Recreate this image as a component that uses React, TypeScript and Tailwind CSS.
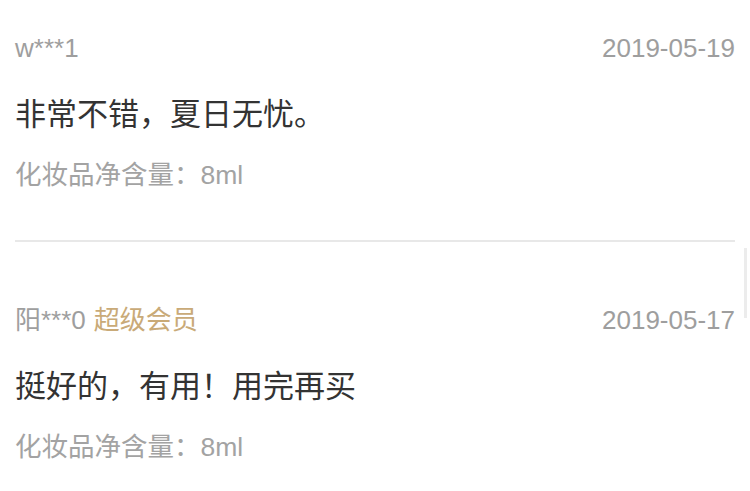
const reviews = [
  { user: "w***1", vip: false, date: "2019-05-19", text: "非常不错，夏日无忧。", spec: "化妆品净含量：8ml" },
  { user: "阳***0", vip: true, date: "2019-05-17", text: "挺好的，有用！用完再买", spec: "化妆品净含量：8ml" },
];

export default function App() {
  return (
    <div
      className="relative h-[491px] w-[750px] overflow-hidden bg-white"
      style={{ fontFamily: '"Liberation Sans", "Noto Sans CJK SC", sans-serif' }}
    >
      {reviews.map((r, i) => (
        <div key={i}>
          {i > 0 && <div className="mx-[15px] h-[2px] bg-[#e8e8e8]" />}
          <div className={`px-[15px] ${i === 0 ? "pt-[28px] pb-[44px]" : "pt-[58px]"}`}>
            <div className="flex h-[40px] items-center justify-between text-[26px] text-[#9e9e9e]">
              <span>
                {r.user}
                {r.vip && <span className="ml-[8px] text-[#c9aa78]">超级会员</span>}
              </span>
              <span>{r.date}</span>
            </div>
            <div className="mt-[27px] flex h-[40px] items-center text-[31px] text-[#333]">{r.text}</div>
            <div className="mt-[21px] flex h-[40px] items-center text-[26.5px] text-[#a3a3a3]">{r.spec}</div>
          </div>
        </div>
      ))}
      <div className="absolute left-[744px] top-[248px] h-[70px] w-[3px] bg-[#ececec]" />
    </div>
  );
}
